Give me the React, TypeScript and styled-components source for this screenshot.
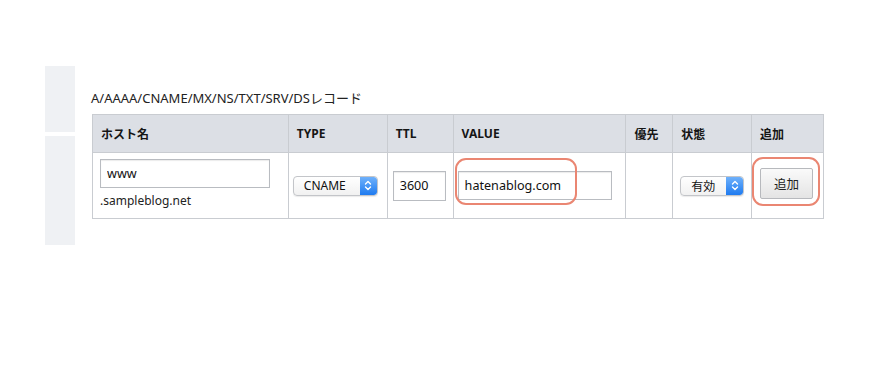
import styled, { createGlobalStyle } from "styled-components";

const GlobalStyle = createGlobalStyle`
  body {
    margin: 0;
    background: #ffffff;
    font-family: "Noto Sans", "Noto Sans CJK JP", sans-serif;
    color: #222;
  }
`;

const Page = styled.div`
  display: flex;
  padding: 66px 0 0 45px;
`;

const Side = styled.div`
  display: flex;
  flex-direction: column;
  gap: 4px;
  width: 30px;
`;

const SideBlock = styled.div<{ h: number }>`
  height: ${(p) => p.h}px;
  background: #eff1f4;
`;

const Main = styled.div`
  margin-left: 16px;
  padding-top: 23px;
`;

const Caption = styled.div`
  font-size: 13px;
  line-height: 18px;
  height: 25px;
  color: #222;
`;

const Table = styled.table`
  margin-left: 1px;
  border-collapse: collapse;
  width: 732px;
  border: 1px solid #c9ccd1;
`;

const Th = styled.th<{ w: number }>`
  width: ${(p) => p.w}px;
  height: 38px;
  padding: 0 0 0 8px;
  background: #dcdfe5;
  border: 1px solid #c9ccd1;
  text-align: left;
  font-size: 12px;
  font-weight: 700;
  color: #151515;
  box-sizing: border-box;
`;

const Td = styled.td<{ pad?: number }>`
  position: relative;
  height: 66px;
  padding: 0 0 0 ${(p) => p.pad ?? 6}px;
  border: 1px solid #c9ccd1;
  vertical-align: middle;
  box-sizing: border-box;
`;

const HostCell = styled(Td)`
  vertical-align: top;
  padding-top: 6px;
`;

const Ring = styled.div<{ l: number; t: number; w: number; h: number }>`
  position: absolute;
  left: ${(p) => p.l}px;
  top: ${(p) => p.t}px;
  width: ${(p) => p.w}px;
  height: ${(p) => p.h}px;
  box-sizing: border-box;
  border: 2px solid #ea8672;
  border-radius: 11px;
  pointer-events: none;
`;

const TextBox = styled.input<{ w: number; h: number }>`
  display: block;
  width: ${(p) => p.w}px;
  height: ${(p) => p.h}px;
  box-sizing: border-box;
  border: 1px solid #b9bcc1;
  box-shadow: inset 0 1px 1px rgba(0, 0, 0, 0.08);
  padding: 0 6px;
  margin: 0;
  font-family: "Noto Sans", "Noto Sans CJK JP", sans-serif;
  font-size: 12.6px;
  color: #111;
  background: #fff;
  outline: none;
`;

const Domain = styled.div`
  font-size: 12px;
  line-height: 17px;
  margin-top: 4px;
  color: #222;
`;

const SelectBox = styled.div<{ w: number }>`
  display: flex;
  align-items: stretch;
  width: ${(p) => p.w}px;
  height: 20px;
  box-sizing: border-box;
  border: 1px solid #c3c5c9;
  border-radius: 4px;
  background: linear-gradient(#ffffff, #f1f1f1);
  box-shadow: 0 1px 1px rgba(0, 0, 0, 0.08);
  overflow: hidden;
`;

const SelectLabel = styled.span`
  flex: 1;
  display: flex;
  align-items: center;
  padding-left: 10px;
  font-size: 12px;
  color: #111;
`;

const Stepper = styled.span`
  width: 17px;
  display: flex;
  align-items: center;
  justify-content: center;
  background: linear-gradient(#6fb1fb, #1f7bf0);
  border-radius: 0 3px 3px 0;
`;

const AddButton = styled.button`
  display: block;
  width: 53px;
  height: 31px;
  margin: 0 0 5px;
  box-sizing: border-box;
  border: 1px solid #b7b9bd;
  border-radius: 2px;
  background: linear-gradient(#fafafa, #e4e4e4);
  font-family: "Noto Sans CJK JP", sans-serif;
  font-size: 12.5px;
  color: #222;
  padding: 0;
`;

const Arrows = () => (
  <svg width="8" height="11" viewBox="0 0 8 11">
    <path d="M1.5 4 L4 1.5 L6.5 4 M1.5 7 L4 9.5 L6.5 7" fill="none" stroke="#fff" strokeWidth="1.4" strokeLinecap="round" strokeLinejoin="round" />
  </svg>
);

export default function App() {
  return (
    <>
      <GlobalStyle />
      <Page>
        <Side>
          <SideBlock h={66} />
          <SideBlock h={109} />
        </Side>
        <Main>
          <Caption>A/AAAA/CNAME/MX/NS/TXT/SRV/DSレコード</Caption>
          <Table>
            <thead>
              <tr>
                <Th w={196}>ホスト名</Th>
                <Th w={99}>TYPE</Th>
                <Th w={66}>TTL</Th>
                <Th w={173}>VALUE</Th>
                <Th w={47}>優先</Th>
                <Th w={79}>状態</Th>
                <Th w={72}>追加</Th>
              </tr>
            </thead>
            <tbody>
              <tr>
                <HostCell pad={7}>
                  <TextBox w={170} h={29} defaultValue="www" />
                  <Domain>.sampleblog.net</Domain>
                </HostCell>
                <Td pad={4}>
                  <SelectBox w={85}>
                    <SelectLabel>CNAME</SelectLabel>
                    <Stepper>
                      <Arrows />
                    </Stepper>
                  </SelectBox>
                </Td>
                <Td pad={5}>
                  <TextBox w={53} h={30} defaultValue="3600" />
                </Td>
                <Td pad={4}>
                  <TextBox w={154} h={29} defaultValue="hatenablog.com" />
                  <Ring l={1} t={5} w={122} h={47} />
                </Td>
                <Td />
                <Td pad={7}>
                  <SelectBox w={64}>
                    <SelectLabel>有効</SelectLabel>
                    <Stepper>
                      <Arrows />
                    </Stepper>
                  </SelectBox>
                </Td>
                <Td pad={8}>
                  <AddButton>追加</AddButton>
                  <Ring l={0} t={4} w={68} h={49} />
                </Td>
              </tr>
            </tbody>
          </Table>
        </Main>
      </Page>
    </>
  );
}
